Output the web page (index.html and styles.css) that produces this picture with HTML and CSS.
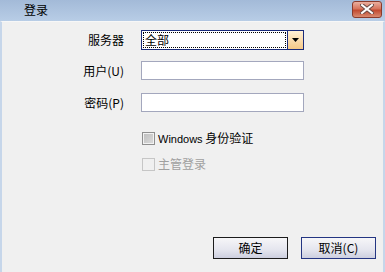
FILE: index.html
```html
<!DOCTYPE html>
<html lang="zh-CN">
<head>
<meta charset="utf-8">
<title>登录</title>
<link rel="stylesheet" href="styles.css">
</head>
<body>
<div class="window">
  <div class="titlebar">
    <span class="title">登录</span>
    <span class="close">
      <svg width="14" height="10" viewBox="0 0 14 10">
        <path d="M2 1 L12 9 M12 1 L2 9" stroke="#6b4a44" stroke-width="4" stroke-linecap="square"/>
        <path d="M2 1 L12 9 M12 1 L2 9" stroke="#ffffff" stroke-width="2" stroke-linecap="square"/>
      </svg>
    </span>
  </div>
  <div class="content">
    <div class="row row-server">
      <span class="label">服务器</span>
      <div class="select">
        <span class="select-text"><span>全部</span></span>
        <span class="drop">
          <svg width="7" height="4" viewBox="0 0 7 4"><path d="M0 0 H7 L3.5 4 Z" fill="#000"/></svg>
        </span>
      </div>
    </div>
    <div class="row row-user">
      <span class="label">用户(U)</span>
      <div class="input"></div>
    </div>
    <div class="row row-pass">
      <span class="label">密码(P)</span>
      <div class="input"></div>
    </div>
    <div class="check check-win">
      <span class="box"></span>
      <span class="check-text"><span class="latin">Windows</span> 身份验证</span>
    </div>
    <div class="check check-admin disabled">
      <span class="box"></span>
      <span class="check-text">主管登录</span>
    </div>
    <div class="buttons">
      <span class="btn btn-default">确定</span>
      <span class="btn btn-cancel">取消(C)</span>
    </div>
  </div>
</div>
</body>
</html>
```
FILE: styles.css
```css
html, body {
  margin: 0;
  padding: 0;
}
body {
  width: 385px;
  height: 272px;
  overflow: hidden;
  font-family: "Noto Sans CJK SC", "Liberation Sans", sans-serif;
  font-size: 12px;
  color: #000;
}
.window {
  width: 385px;
  height: 272px;
  display: flex;
  flex-direction: column;
  background: #f0f0f0;
}
.titlebar {
  height: 21px;
  flex: none;
  display: flex;
  align-items: center;
  padding-left: 24px;
  padding-right: 3px;
  background: linear-gradient(#a3bad8, #b8cde6);
}
.title {
  font-size: 12px;
  line-height: 14px;
  margin-top: -1px;
}
.close {
  margin-left: auto;
  width: 28px;
  height: 15px;
  margin-top: -3px;
  border: 1px solid #8a3b2c;
  border-radius: 3px;
  background: linear-gradient(#eab0a0 0%, #d7745c 45%, #c24a30 55%, #d88a70 100%);
  display: flex;
  align-items: center;
  justify-content: center;
}
.content {
  flex: 1;
  display: flex;
  flex-direction: column;
  border-left: 2px solid #c6d6ea;
  border-right: 2px solid #c6d6ea;
  border-top: 1px solid #f7f7f7;
  padding-top: 8px;
}
.row {
  display: flex;
  align-items: center;
}
.label {
  width: 122px;
  text-align: right;
  line-height: 16px;
}
.row-user { margin-top: 11px; }
.row-pass { margin-top: 13px; }
.select {
  margin-left: 17px;
  width: 161px;
  height: 18px;
  border: 1px solid #1a2b7a;
  background: #fff;
  display: flex;
}
.select-text {
  flex: 1;
  margin: 1px;
  border: 1px dotted #000;
  display: flex;
  align-items: center;
  padding-left: 1px;
  line-height: 14px;
}
.drop {
  width: 15px;
  border-left: 1px solid #1a2b7a;
  background: linear-gradient(#fff0d6, #f6c987);
  display: flex;
  align-items: center;
  justify-content: center;
}
.input {
  margin-left: 17px;
  width: 161px;
  height: 17px;
  border: 1px solid #a3a7bd;
  background: #fff;
}
.check {
  display: flex;
  align-items: center;
  margin-left: 140px;
  line-height: 16px;
}
.check-win { margin-top: 18px; }
.check-admin { margin-top: 9px; }
.box {
  width: 11px;
  height: 11px;
  border: 1px solid #8f8f8f;
  background: linear-gradient(135deg, #bdbdbd, #dcdcdc);
  box-shadow: inset 0 0 0 1px #f2f2f2;
  margin-right: 3px;
}
.disabled .box {
  border-color: #c6c6c6;
  background: #f0f0f0;
  box-shadow: none;
}
.disabled .check-text {
  color: #a0a0a0;
}
.latin {
  font-family: "Liberation Sans", sans-serif;
  font-size: 11px;
}
.buttons {
  margin-top: auto;
  margin-bottom: 13px;
  display: flex;
  justify-content: flex-end;
  gap: 13px;
  padding-right: 7px;
}
.btn {
  width: 73px;
  height: 20px;
  display: flex;
  align-items: center;
  justify-content: center;
  background: linear-gradient(#f6f6f8, #e4e5ee 60%, #cdcfdf);
  line-height: 14px;
}
.btn-default {
  border: 1px solid #1c1c1c;
}
.btn-cancel {
  border: 1px solid #243582;
}
```
